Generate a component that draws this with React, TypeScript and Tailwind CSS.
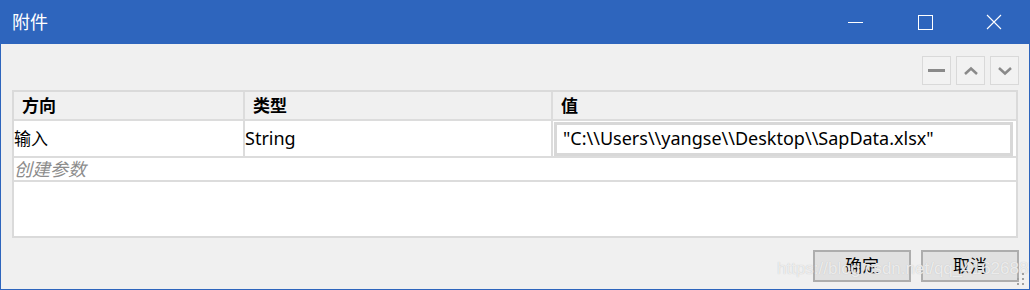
import React from 'react';

const font = { fontFamily: '"Noto Sans", "Noto Sans CJK SC", sans-serif' };

const ToolButton: React.FC<{ children: React.ReactNode }> = ({ children }) => (
  <div className="w-[29px] h-[29px] border border-[#d9d9d9] bg-[#f2f2f2] flex items-center justify-center">
    {children}
  </div>
);

export default function App() {
  return (
    <div
      className="relative w-[1030px] h-[290px] flex flex-col bg-[#f0f0f0] border-x border-b border-[#2e65bd] overflow-hidden"
      style={font}
    >
      {/* Title bar */}
      <div className="h-[44px] shrink-0 bg-[#2e65bd] flex items-center text-white -mx-px">
        <span className="pl-[12px] text-[18px] leading-none">附件</span>
        <div className="ml-auto flex items-center h-full">
          <div className="w-[70px] h-full flex items-center justify-center">
            <div className="w-[15px] h-px bg-white" />
          </div>
          <div className="w-[70px] h-full flex items-center justify-center">
            <div className="w-[15px] h-[15px] border border-white" />
          </div>
          <div className="w-[70px] h-full flex items-center justify-center pr-[2px]">
            <svg width="16" height="16" viewBox="0 0 16 16">
              <path d="M1 1 L15 15 M15 1 L1 15" stroke="white" strokeWidth="1.1" fill="none" />
            </svg>
          </div>
        </div>
      </div>

      {/* Body */}
      <div className="flex-1 flex flex-col pl-[11px] pr-[10px]">
        <div className="flex justify-end gap-[5px] mt-[12px]">
          <ToolButton>
            <div className="w-[17px] h-[3px] bg-[#8a8a8a]" />
          </ToolButton>
          <ToolButton>
            <svg width="16" height="10" viewBox="0 0 16 10">
              <path d="M2 8 L8 2.5 L14 8" stroke="#8a8a8a" strokeWidth="2.5" fill="none" />
            </svg>
          </ToolButton>
          <ToolButton>
            <svg width="16" height="10" viewBox="0 0 16 10">
              <path d="M2 2 L8 7.5 L14 2" stroke="#8a8a8a" strokeWidth="2.5" fill="none" />
            </svg>
          </ToolButton>
        </div>

        {/* Table */}
        <div className="mt-[5px] mr-px h-[148px] border-2 border-[#dadada] bg-white flex flex-col">
          <div className="h-[29px] flex bg-[#f0f0f0] border-b-2 border-[#dcdcdc] font-bold text-[17px] text-black">
            <div className="w-[231px] pl-[8px] flex items-center border-r-2 border-[#dcdcdc]">方向</div>
            <div className="w-[308px] pl-[8px] flex items-center border-r-2 border-[#dcdcdc]">类型</div>
            <div className="flex-1 pl-[8px] flex items-center">值</div>
          </div>
          <div className="h-[37px] flex border-b-2 border-[#dcdcdc] text-[17px] text-black">
            <div className="w-[231px] flex items-center border-r-2 border-[#dcdcdc]">输入</div>
            <div className="w-[308px] flex items-center border-r-2 border-[#dcdcdc] text-[18px]">String</div>
            <div className="flex-1 flex items-center pl-[1px] pr-[3px]">
              <div className="w-full h-[34px] border-[3px] border-[#d8d8d8] bg-white flex items-center pl-[6px] text-[18px]">
                "C:\\Users\\yangse\\Desktop\\SapData.xlsx"
              </div>
            </div>
          </div>
          <div className="h-[24px] flex items-center border-b-2 border-[#dcdcdc] text-[18px] italic text-[#8c8c8c]">
            创建参数
          </div>
          <div className="flex-1" />
        </div>

        {/* Footer buttons */}
        <div className="flex justify-end gap-[10px] mt-[12px]">
          <div className="w-[98px] h-[32px] border-2 border-[#adadad] bg-[#e1e1e1] flex items-center justify-center text-[17px] text-black">
            确定
          </div>
          <div className="w-[98px] h-[32px] border-2 border-[#adadad] bg-[#e1e1e1] flex items-center justify-center text-[17px] text-black">
            取消
          </div>
        </div>
      </div>

      {/* Watermark */}
      <div
        className="absolute left-[776px] top-[256px] text-[17px] whitespace-nowrap text-white/70 pointer-events-none"
        style={{ fontFamily: '"Liberation Sans", Arial, sans-serif', textShadow: '0 0 1px #bbb' }}
      >
        https://blog.csdn.net/qq_41626887
      </div>
      {/* Resize grip */}
      <svg className="absolute right-[3px] bottom-[3px]" width="10" height="14" viewBox="0 0 10 14">
        <rect x="6" y="1" width="2" height="2" fill="#a0a0a0" />
        <rect x="6" y="6" width="2" height="2" fill="#a0a0a0" />
        <rect x="1" y="6" width="2" height="2" fill="#a0a0a0" />
        <rect x="6" y="11" width="2" height="2" fill="#a0a0a0" />
        <rect x="1" y="11" width="2" height="2" fill="#a0a0a0" />
      </svg>
    </div>
  );
}
